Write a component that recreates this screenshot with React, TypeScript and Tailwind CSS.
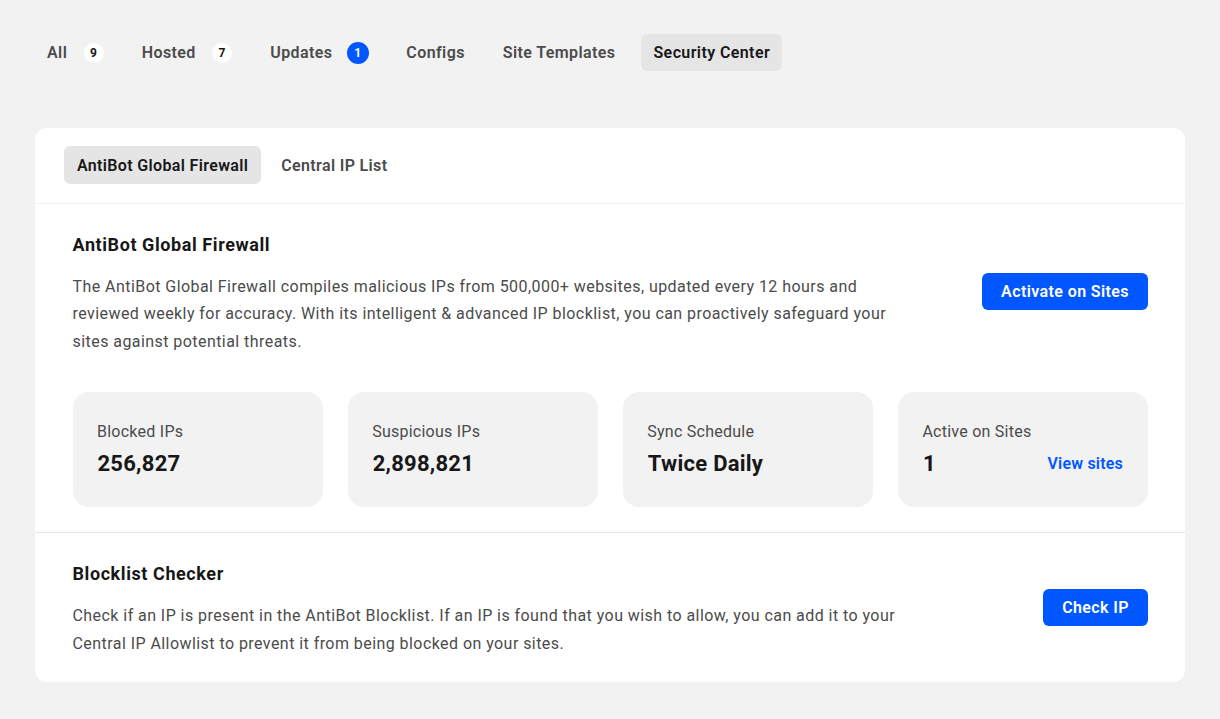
const navTabs = [
  { label: "All", count: "9" },
  { label: "Hosted", count: "7" },
  { label: "Updates", count: "1", alert: true },
  { label: "Configs" },
  { label: "Site Templates" },
  { label: "Security Center", active: true },
];

const stats = [
  { label: "Blocked IPs", value: "256,827" },
  { label: "Suspicious IPs", value: "2,898,821" },
  { label: "Sync Schedule", value: "Twice Daily" },
  { label: "Active on Sites", value: "1", link: "View sites" },
];

const App = () => {
  return (
    <div className="min-h-[719px] bg-[#f2f2f2] px-[35px] pt-[34px] font-['Roboto',sans-serif] text-[#4b4b4b]">
      <nav className="flex gap-3.5">
        {navTabs.map((tab) => (
          <div
            key={tab.label}
            className={`flex h-[37px] items-center rounded-md px-3 text-base font-semibold tracking-[0.4px] ${
              tab.active ? "bg-[#e5e5e5] text-[#171717]" : ""
            }`}
          >
            {tab.label}
            {tab.count && (
              <span
                className={`flex items-center justify-center rounded-full text-xs font-bold ${
                  tab.alert ? "ml-[14.5px] mr-[-0.5px] h-[22px] w-[22px] bg-[#0057ff] text-white" : "ml-[16.5px] h-5 w-5 bg-white text-[#171717]"
                }`}
              >
                {tab.count}
              </span>
            )}
          </div>
        ))}
      </nav>

      <main className="mt-[57px] h-[554px] w-[1150px] rounded-xl bg-white">
        <div className="flex h-[76px] gap-2 border-b border-[#f2f2f2] pl-[29px] pt-[18px]">
          <div className="flex h-[38px] items-center rounded-md bg-[#e5e5e5] px-[13px] pt-px text-base font-semibold tracking-[0.35px] text-[#171717]">
            AntiBot Global Firewall
          </div>
          <div className="flex h-[38px] items-center px-3 pt-px text-base font-semibold tracking-[0.35px]">Central IP List</div>
        </div>

        <section className="h-[329px] border-b border-[#e5e5e5] pl-[37.5px] pr-[37px] pt-[28px]">
          <h2 className="text-lg leading-[26px] font-bold tracking-[0.58px] text-[#171717]">AntiBot Global Firewall</h2>
          <div className="mt-[14.75px] flex items-start justify-between">
            <p className="w-[830px] text-base leading-[27.5px] tracking-[0.44px]">
              The AntiBot Global Firewall compiles malicious IPs from 500,000+ websites, updated every 12 hours and
              reviewed weekly for accuracy. With its intelligent &amp; advanced IP blocklist, you can proactively
              safeguard your sites against potential threats.
            </p>
            <button className="mt-[0.25px] h-[37px] rounded-md bg-[#0057ff] px-[19px] text-base font-semibold tracking-[0.4px] text-white">
              Activate on Sites
            </button>
          </div>
          <div className="mt-[36.25px] grid grid-cols-4 gap-[25px]">
            {stats.map((stat) => (
              <div key={stat.label} className="h-[115px] rounded-2xl bg-[#f2f2f2] pl-[24.5px] pr-[25px] pt-[27px]">
                <div className="text-base leading-[26px] tracking-[0.25px]">{stat.label}</div>
                <div className="mt-[3px] flex items-center justify-between">
                  <span className="ml-[0.5px] text-[22px] leading-[32px] font-bold tracking-[0.25px] text-[#171717]">{stat.value}</span>
                  {stat.link && <a className="text-base font-semibold tracking-[0.2px] text-[#0057ff]">{stat.link}</a>}
                </div>
              </div>
            ))}
          </div>
        </section>

        <section className="flex items-center justify-between pl-[37.5px] pr-[37px] pt-[28px]">
          <div>
            <h2 className="text-lg leading-[26px] font-bold tracking-[0.58px] text-[#171717]">Blocklist Checker</h2>
            <p className="mt-[15px] w-[840px] text-base leading-[27.5px] tracking-[0.44px]">
              Check if an IP is present in the AntiBot Blocklist. If an IP is found that you wish to allow, you can add
              it to your Central IP Allowlist to prevent it from being blocked on your sites.
            </p>
          </div>
          <button className="mb-[3px] h-[37px] rounded-md bg-[#0057ff] px-[19px] text-base font-semibold tracking-[0.4px] text-white">
            Check IP
          </button>
        </section>
      </main>
    </div>
  );
};

export default App;
